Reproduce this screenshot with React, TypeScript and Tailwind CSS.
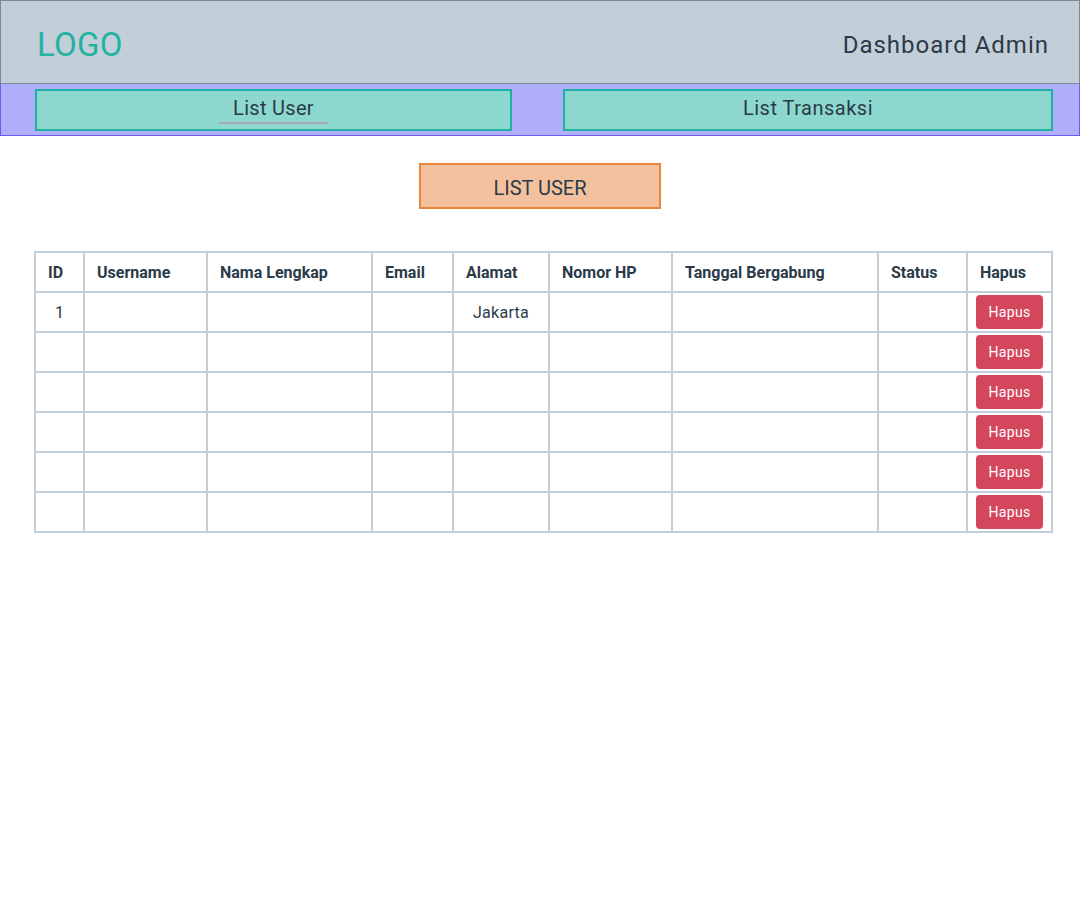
import React from "react";

const columns = [
  { label: "ID", width: "47px" },
  { label: "Username", width: "121px" },
  { label: "Nama Lengkap", width: "163px" },
  { label: "Email", width: "79px" },
  { label: "Alamat", width: "94px" },
  { label: "Nomor HP", width: "121px" },
  { label: "Tanggal Bergabung", width: "204px" },
  { label: "Status", width: "87px" },
  { label: "Hapus", width: "84px" },
];

// only the first row has data in the mockup
const rows = [
  { id: "1", alamat: "Jakarta" },
  { id: "", alamat: "" },
  { id: "", alamat: "" },
  { id: "", alamat: "" },
  { id: "", alamat: "" },
  { id: "", alamat: "" },
];

function UserTable() {
  return (
    <div className="ml-[34px] inline-grid grid-cols-[47px_121px_163px_79px_94px_121px_204px_87px_83px] gap-[2px] bg-[#c3cfd8] p-[2px]">
      {columns.map((c) => (
        <div
          key={c.label}
          className="h-[38px] bg-white pl-[12px] pt-[2px] flex items-center text-[16px] font-bold text-[#2b3a48]"
        >
          {c.label}
        </div>
      ))}
      {rows.map((r, i) => (
        <React.Fragment key={i}>
          <div className="h-[38px] bg-white pt-[2px] flex items-center justify-center text-[16px] text-[#2b3a48]">
            {r.id}
          </div>
          <div className="h-[38px] bg-white" />
          <div className="h-[38px] bg-white" />
          <div className="h-[38px] bg-white" />
          <div className="h-[38px] bg-white pt-[2px] flex items-center justify-center text-[16px] text-[#2b3a48] tracking-[0.3px]">
            {r.alamat}
          </div>
          <div className="h-[38px] bg-white" />
          <div className="h-[38px] bg-white" />
          <div className="h-[38px] bg-white" />
          <div className="h-[38px] bg-white flex items-center justify-center">
            <button className="w-[67px] h-[34px] rounded-[4px] bg-[#d4465c] text-white text-[14px] tracking-[0.3px]">
              Hapus
            </button>
          </div>
        </React.Fragment>
      ))}
    </div>
  );
}

export default function App() {
  return (
    <div
      className="w-[1080px] h-[924px] bg-white text-[#2b3a48]"
      style={{ fontFamily: "Roboto, 'Liberation Sans', sans-serif" }}
    >
      {/* Header */}
      <div className="h-[84px] bg-[#c3cfd8] border border-[#7b8a97] flex items-center justify-between pt-[6px] pl-[36px] pr-[30px]">
        <span className="text-[33px] text-[#1fb3a1] tracking-[0.3px]">LOGO</span>
        <span className="text-[24px] tracking-[1px]">Dashboard Admin</span>
      </div>

      {/* Nav */}
      <div className="h-[52px] bg-[#b0aefb] border-x border-b border-[#6a5cf3] flex items-center pl-[34px] pr-[26px] gap-[51px]">
        <div className="w-[477px] h-[42px] bg-[#8dd8ce] border-2 border-[#20b0a0] flex justify-center">
          <span className="text-[20px] pt-[2px] px-[14px] h-[33px] border-b-2 border-[#a8aab0] tracking-[0.3px]">
            List User
          </span>
        </div>
        <div className="flex-1 h-[42px] bg-[#8dd8ce] border-2 border-[#20b0a0] pb-[4px] flex items-center justify-center text-[20px] tracking-[0.5px]">
          List Transaksi
        </div>
      </div>

      {/* Title */}
      <div className="flex justify-center pt-[27px] pb-[42px]">
        <div className="w-[242px] h-[46px] bg-[#f3c19e] border-2 border-[#e8853a] pt-[4px] flex items-center justify-center text-[20px]">
          LIST USER
        </div>
      </div>

      <UserTable />
    </div>
  );
}
